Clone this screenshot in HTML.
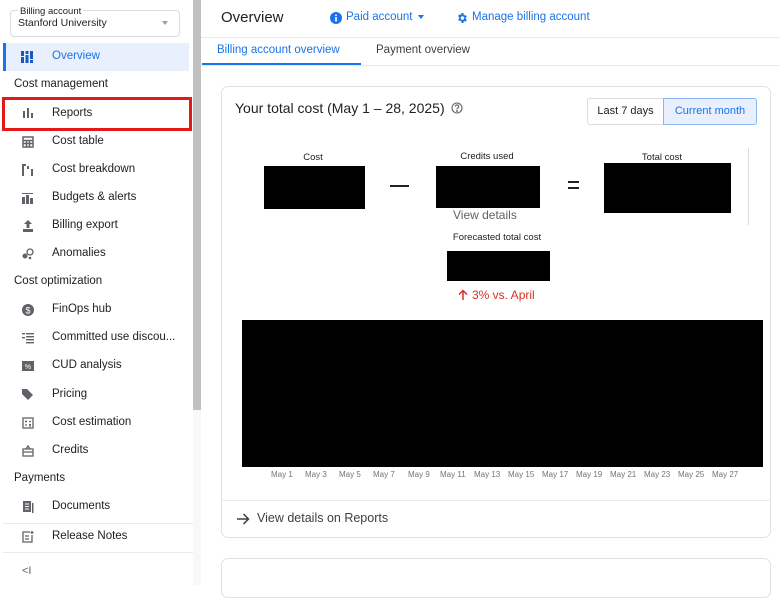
<!DOCTYPE html>
<html><head><meta charset="utf-8"><style>
*{box-sizing:border-box;margin:0;padding:0}
body{width:780px;height:585px;overflow:hidden;background:#fff;font-family:"Liberation Sans",Arial,sans-serif;color:#202124;position:relative}
.a{position:absolute;white-space:nowrap}
.nav{font-size:11.5px;color:#202124}
.sec{font-size:11.5px;color:#202124;left:14px}
.blk{position:absolute;background:#000}
.lbl{font-size:9.5px;color:#202124;transform:translateX(-50%)}
.day{font-size:8px;color:#70757a;top:470px}
</style></head><body>
<!-- sidebar -->
<div class="a" style="left:10px;top:10px;width:170px;height:27px;border:1px solid #dadce0;border-radius:4px"></div>
<div class="a" style="left:18px;top:6px;font-size:9.5px;background:#fff;padding:0 2px">Billing account</div>
<div class="a" style="left:18px;top:17px;font-size:10.5px">Stanford University</div>
<div class="a" style="left:162px;top:21px;border:3.5px solid transparent;border-top:4px solid #9aa0a6"></div>
<div class="a" style="left:3px;top:43px;width:186px;height:28px;background:#e8f0fe;border-left:3px solid #1a73e8"></div>
<svg class="a" style="left:21px;top:51px" width="12" height="12" viewBox="0 0 12 12" fill="#1a56c4"><rect x="0" y="0" width="3" height="5"/><rect x="0" y="6" width="3" height="6"/><rect x="4.5" y="0" width="3" height="3"/><rect x="4.5" y="4" width="3" height="8"/><rect x="9" y="0" width="3" height="8"/><rect x="9" y="9" width="3" height="3"/></svg>
<div class="a nav" style="left:52px;top:50px;color:#1a73e8">Overview</div>
<div class="a sec" style="top:78px">Cost management</div>
<div class="a" style="left:2px;top:97px;width:190px;height:34px;border:3px solid #e3191c"></div>
<svg class="a" style="left:22px;top:108px" width="12" height="11" viewBox="0 0 12 11" fill="#5f6368"><rect x="1" y="3" width="2" height="7"/><rect x="5" y="0" width="2" height="10"/><rect x="9" y="5" width="2" height="5"/></svg>
<div class="a nav" style="left:52px;top:107px">Reports</div>
<svg class="a" style="left:22px;top:136px" width="12" height="12" viewBox="0 0 12 12" fill="none" stroke="#5f6368" stroke-width="1.5"><rect x="1" y="1" width="10" height="10"/><path d="M1 4.5h10M1 7.5h10M4.5 4.5v6.5M7.5 4.5v6.5"/></svg>
<div class="a nav" style="left:52px;top:135px">Cost table</div>
<svg class="a" style="left:22px;top:164px" width="12" height="12" viewBox="0 0 12 12" fill="#5f6368"><rect x="0" y="0" width="2" height="12"/><rect x="0" y="0" width="4" height="2"/><rect x="5" y="2" width="2" height="3"/><rect x="9" y="5" width="2" height="7"/></svg>
<div class="a nav" style="left:52px;top:163px">Cost breakdown</div>
<svg class="a" style="left:22px;top:192px" width="12" height="12" viewBox="0 0 12 12" fill="#5f6368"><rect x="0" y="5" width="3" height="7"/><rect x="4" y="3" width="3" height="9"/><rect x="8" y="6" width="3" height="6"/><rect x="0" y="1" width="11" height="1"/></svg>
<div class="a nav" style="left:52px;top:191px">Budgets &amp; alerts</div>
<svg class="a" style="left:22px;top:220px" width="12" height="12" viewBox="0 0 12 12" fill="#5f6368"><path d="M6 0L2 4h2.5v4h3V4H10z"/><rect x="1" y="9" width="10" height="3"/></svg>
<div class="a nav" style="left:52px;top:219px">Billing export</div>
<svg class="a" style="left:22px;top:248px" width="12" height="12" viewBox="0 0 12 12"><circle cx="3" cy="8" r="2.5" fill="#5f6368"/><circle cx="8" cy="4" r="3" fill="none" stroke="#5f6368" stroke-width="1.3"/><circle cx="8" cy="10" r="1.3" fill="#5f6368"/></svg>
<div class="a nav" style="left:52px;top:247px">Anomalies</div>
<div class="a sec" style="top:275px">Cost optimization</div>
<svg class="a" style="left:22px;top:304px" width="12" height="12" viewBox="0 0 12 12"><circle cx="6" cy="6" r="6" fill="#5f6368"/><text x="6" y="9.5" font-size="9" fill="#fff" text-anchor="middle" font-family="Liberation Sans">$</text></svg>
<div class="a nav" style="left:52px;top:303px">FinOps hub</div>
<svg class="a" style="left:22px;top:332px" width="12" height="12" viewBox="0 0 12 12" fill="#5f6368"><rect x="0" y="1" width="3" height="1.4"/><rect x="4" y="1" width="8" height="1.4"/><rect x="4" y="4" width="8" height="1.4"/><rect x="0" y="5" width="3" height="1.4"/><rect x="4" y="7" width="8" height="1.4"/><rect x="4" y="10" width="8" height="1.4"/></svg>
<div class="a nav" style="left:52px;top:331px">Committed use discou...</div>
<svg class="a" style="left:22px;top:361px" width="12" height="10" viewBox="0 0 12 10"><rect width="12" height="10" fill="#5f6368"/><text x="6" y="8" font-size="7" fill="#fff" text-anchor="middle" font-family="Liberation Sans">%</text></svg>
<div class="a nav" style="left:52px;top:359px">CUD analysis</div>
<svg class="a" style="left:22px;top:388px" width="12" height="12" viewBox="0 0 12 12" fill="#5f6368"><path d="M0 1v5l6 6 5-5-6-6H1z"/></svg>
<div class="a nav" style="left:52px;top:388px">Pricing</div>
<svg class="a" style="left:22px;top:417px" width="12" height="12" viewBox="0 0 12 12" fill="none" stroke="#5f6368" stroke-width="1.3"><rect x="1" y="1" width="10" height="10"/><path d="M3 4.5h2M4 3.5v2M7 4.5h2M3 8h2M7 7.5h2M7 9h2"/></svg>
<div class="a nav" style="left:52px;top:416px">Cost estimation</div>
<svg class="a" style="left:22px;top:445px" width="12" height="12" viewBox="0 0 12 12" fill="none" stroke="#5f6368" stroke-width="1.3"><rect x="1" y="4" width="10" height="7"/><path d="M1 7h10M4 4l2-3 2 3"/></svg>
<div class="a nav" style="left:52px;top:444px">Credits</div>
<div class="a sec" style="top:472px">Payments</div>
<svg class="a" style="left:22px;top:501px" width="12" height="12" viewBox="0 0 12 12" fill="#5f6368"><rect x="1" y="0" width="8" height="11"/><rect x="10" y="2" width="1.5" height="10"/><path d="M3 3h4M3 5.5h4M3 8h4" stroke="#fff" stroke-width="1"/></svg>
<div class="a nav" style="left:52px;top:500px">Documents</div>
<div class="a" style="left:3px;top:523px;width:190px;height:1px;background:#e8eaed"></div>
<svg class="a" style="left:22px;top:531px" width="12" height="12" viewBox="0 0 12 12" fill="none" stroke="#5f6368" stroke-width="1.3"><path d="M8 1H1v10h9V4"/><path d="M3 5h4M3 8h4"/><path d="M10 0v3M8.5 1.5h3"/></svg>
<div class="a nav" style="left:52px;top:530px">Release Notes</div>
<div class="a" style="left:3px;top:552px;width:190px;height:1px;background:#e8eaed"></div>
<div class="a" style="left:22px;top:565px;font-size:11px;color:#5f6368">&lt;I</div>
<div class="a" style="left:193px;top:0;width:8px;height:585px;background:#f8f8f8"></div>
<div class="a" style="left:193px;top:0;width:8px;height:410px;background:#c1c1c1"></div>
<!-- main -->
<div class="a" style="left:221px;top:9px;font-size:15px">Overview</div>
<svg class="a" style="left:330px;top:12px" width="12" height="12" viewBox="0 0 12 12"><circle cx="6" cy="6" r="6" fill="#1a73e8"/><rect x="5.2" y="5" width="1.6" height="4.5" fill="#fff"/><circle cx="6" cy="3.2" r="0.9" fill="#fff"/></svg>
<div class="a" style="left:346px;top:11px;font-size:11.5px;color:#1a73e8">Paid account</div>
<div class="a" style="left:418px;top:15px;border:3.5px solid transparent;border-top:4px solid #1a73e8"></div>
<svg class="a" style="left:456px;top:12px" width="12" height="12" viewBox="0 0 24 24" fill="#1a73e8"><path d="M19.4 13c.04-.32.1-.66.1-1s-.06-.68-.1-1l2.1-1.65-2-3.46-2.5 1a7.3 7.3 0 0 0-1.7-1L14.9 2h-4l-.4 2.65c-.6.25-1.2.6-1.700 1l-2.5-1-2 3.46L6.4 11c-.04.32-.1.66-.1 1s.06.68.1 1l-2.1 1.65 2 3.46 2.5-1c.5.4 1.1.75 1.7 1L10.9 22h4l.4-2.65c.6-.25 1.2-.6 1.7-1l2.5 1 2-3.46zM12.9 15.5a3.5 3.5 0 1 1 0-7 3.5 3.5 0 0 1 0 7z"/></svg>
<div class="a" style="left:472px;top:11px;font-size:11.5px;color:#1a73e8">Manage billing account</div>
<div class="a" style="left:201px;top:37px;width:579px;height:1px;background:#e8eaed"></div>
<div class="a" style="left:217px;top:44px;font-size:11.5px;color:#1a73e8">Billing account overview</div>
<div class="a" style="left:376px;top:44px;font-size:11.5px;color:#3c4043">Payment overview</div>
<div class="a" style="left:202px;top:63px;width:159px;height:2px;background:#1a73e8"></div>
<div class="a" style="left:201px;top:65px;width:579px;height:1px;background:#e8eaed"></div>
<!-- card -->
<div class="a" style="left:221px;top:86px;width:550px;height:452px;border:1px solid #e0e0e0;border-radius:7px"></div>
<div class="a" style="left:235px;top:100px;font-size:14px">Your total cost (May 1 – 28, 2025)</div>
<svg class="a" style="left:451px;top:102px" width="12" height="12" viewBox="0 0 12 12" fill="none" stroke="#5f6368" stroke-width="1.1"><circle cx="6" cy="6" r="5"/><path d="M4.5 4.6a1.6 1.6 0 1 1 2 1.5c-.4.2-.5.5-.5 1v.3"/><circle cx="6" cy="9" r=".4" fill="#5f6368"/></svg>
<div class="a" style="left:587px;top:98px;width:77px;height:27px;border:1px solid #dadce0;border-radius:3px 0 0 3px;font-size:11px;line-height:25px;text-align:center">Last 7 days</div>
<div class="a" style="left:663px;top:98px;width:94px;height:27px;border:1px solid #8ab4f8;background:#e8f0fe;border-radius:0 3px 3px 0;font-size:11px;line-height:25px;text-align:center;color:#1a73e8">Current month</div>
<div class="a lbl" style="left:313px;top:152px">Cost</div>
<div class="blk" style="left:264px;top:166px;width:101px;height:43px"></div>
<div class="a" style="left:390px;top:185px;width:19px;height:2px;background:#202124"></div>
<div class="a lbl" style="left:487px;top:151px">Credits used</div>
<div class="blk" style="left:436px;top:166px;width:104px;height:42px"></div>
<div class="a" style="left:568px;top:181px;width:11px;height:2px;background:#202124"></div>
<div class="a" style="left:568px;top:187px;width:11px;height:2px;background:#202124"></div>
<div class="a lbl" style="left:662px;top:152px">Total cost</div>
<div class="blk" style="left:604px;top:163px;width:127px;height:50px"></div>
<div class="a" style="left:748px;top:148px;width:1px;height:77px;background:#dadce0"></div>
<div class="a" style="left:453px;top:208px;font-size:12px;color:#5f6368">View details</div>
<div class="a lbl" style="left:497px;top:232px">Forecasted total cost</div>
<div class="blk" style="left:447px;top:251px;width:103px;height:30px"></div>
<svg class="a" style="left:458px;top:289px" width="10" height="11" viewBox="0 0 10 11" fill="none" stroke="#d93025" stroke-width="1.5"><path d="M5 11V1.5M1 5.5l4-4 4 4"/></svg>
<div class="a" style="left:472px;top:288px;font-size:12px;color:#d93025">3% vs. April</div>
<div class="blk" style="left:242px;top:320px;width:521px;height:147px"></div>
<div class="a day" style="left:271px">May 1</div>
<div class="a day" style="left:305px">May 3</div>
<div class="a day" style="left:339px">May 5</div>
<div class="a day" style="left:373px">May 7</div>
<div class="a day" style="left:408px">May 9</div>
<div class="a day" style="left:440px">May 11</div>
<div class="a day" style="left:474px">May 13</div>
<div class="a day" style="left:508px">May 15</div>
<div class="a day" style="left:542px">May 17</div>
<div class="a day" style="left:576px">May 19</div>
<div class="a day" style="left:610px">May 21</div>
<div class="a day" style="left:644px">May 23</div>
<div class="a day" style="left:678px">May 25</div>
<div class="a day" style="left:712px">May 27</div>
<div class="a" style="left:222px;top:500px;width:548px;height:1px;background:#e8eaed"></div>
<svg class="a" style="left:237px;top:513px" width="13" height="12" viewBox="0 0 13 12" fill="none" stroke="#3c4043" stroke-width="1.5"><path d="M0 6h11.5M6.5 1l5 5-5 5"/></svg>
<div class="a" style="left:257px;top:511px;font-size:12.5px;color:#3c4043">View details on Reports</div>
<div class="a" style="left:221px;top:558px;width:550px;height:40px;border:1px solid #e0e0e0;border-radius:7px"></div>
</body></html>
